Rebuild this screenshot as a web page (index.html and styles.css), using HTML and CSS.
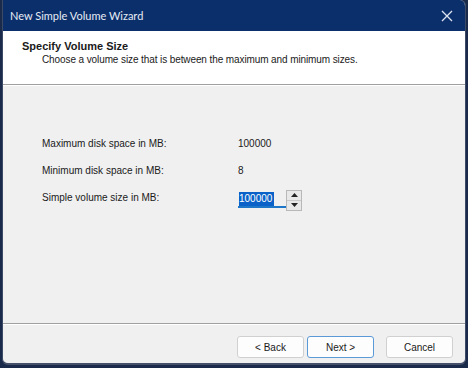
FILE: index.html
```html
<!DOCTYPE html>
<html>
<head>
<meta charset="utf-8">
<link rel="stylesheet" href="styles.css">
</head>
<body>
<div class="window">
  <div class="titlebar">
    <span class="title">New Simple Volume Wizard</span>
    <svg class="close" width="12" height="12" viewBox="0 0 12 12"><path d="M1 1 L11 11 M11 1 L1 11" stroke="#dfe6f2" stroke-width="1.3" fill="none"/></svg>
  </div>
  <div class="header">
    <div class="h-title">Specify Volume Size</div>
    <div class="h-sub">Choose a volume size that is between the maximum and minimum sizes.</div>
  </div>
  <div class="body">
    <div class="grid">
      <div class="lbl">Maximum disk space in MB:</div>
      <div class="val">100000</div>
      <div class="lbl">Minimum disk space in MB:</div>
      <div class="val">8</div>
      <div class="lbl">Simple volume size in MB:</div>
      <div class="val spin-row">
        <div class="input"><span class="sel">100000</span></div>
        <div class="spin">
          <div class="sb"><svg width="7" height="4" viewBox="0 0 7 4"><path d="M3.5 0 L7 4 L0 4Z" fill="#222"/></svg></div>
          <div class="sb"><svg width="7" height="4" viewBox="0 0 7 4"><path d="M0 0 L7 0 L3.5 4Z" fill="#222"/></svg></div>
        </div>
      </div>
    </div>
  </div>
  <div class="footer">
    <button class="btn">&lt; Back</button>
    <button class="btn primary">Next &gt;</button>
    <button class="btn cancel">Cancel</button>
  </div>
</div>
</body>
</html>
```
FILE: styles.css
```css
html, body {
  margin: 0;
  padding: 0;
  background: #1a2a4a;
}
.window {
  width: 462px;
  height: 363px;
  margin-left: 2px;
  border-left: 1px solid #3c4a66;
  border-right: 1px solid #3c4a66;
  border-bottom: 2px solid #44506a;
  border-radius: 0 6px 6px 6px;
  overflow: hidden;
  background: #f0f0f0;
  display: flex;
  flex-direction: column;
  font-family: "Liberation Sans", Arial, sans-serif;
  font-size: 10px;
  color: #1a1a1a;
}
.titlebar {
  height: 31px;
  flex: none;
  background: #0b2f6b;
  display: flex;
  align-items: center;
  justify-content: space-between;
  padding: 0 12px 0 7px;
}
.title {
  font-family: Lato, "Noto Sans", sans-serif;
  font-size: 11px;
  color: #e6ecf5;
}
.close { display: block; }
.header {
  height: 54px;
  flex: none;
  background: #fff;
  border-bottom: 1px solid #a0a0a0;
  box-shadow: 0 1px 0 #ffffff;
  padding: 9px 0 0 19px;
  box-sizing: border-box;
}
.h-title {
  font-weight: bold;
  font-size: 11px;
  line-height: 13px;
}
.h-sub {
  padding-left: 20px;
  line-height: 13px;
  letter-spacing: -0.1px;
}
.body {
  flex: 1;
  border-bottom: 1px solid #a0a0a0;
  box-shadow: 0 1px 0 #ffffff;
  padding: 45px 0 0 39px;
}
.grid {
  display: grid;
  grid-template-columns: 196px auto;
  grid-auto-rows: 27px;
  align-items: center;
}
.lbl, .val { line-height: 12px; }
.spin-row {
  display: flex;
  align-items: center;
}
.input {
  width: 48px;
  height: 17px;
  border-bottom: 2px solid #1e76c8;
  display: flex;
  align-items: center;
  padding-left: 1px;
  margin-top: 4px;
  box-sizing: border-box;
}
.sel {
  background: #0a62c8;
  color: #fff;
  line-height: 14px;
  padding-right: 2px;
}
.spin {
  display: flex;
  flex-direction: column;
  border: 1px solid #b8b8b8;
  width: 14px;
  height: 19px;
  margin-top: 5px;
  background: #e8e8e8;
}
.sb {
  flex: 1;
  display: flex;
  align-items: center;
  justify-content: center;
}
.sb + .sb { border-top: 1px solid #c8c8c8; }
.footer {
  height: 39px;
  flex: none;
  display: flex;
  align-items: flex-start;
  padding: 12px 0 0 234px;
  box-sizing: border-box;
}
.btn {
  width: 67px;
  height: 22px;
  border: 1px solid #d0d0d0;
  border-radius: 3px;
  background: #fdfdfd;
  font-family: "Liberation Sans", Arial, sans-serif;
  font-size: 10px;
  color: #1a1a1a;
  padding: 0;
  margin-right: 3px;
}
.btn.primary { border: 1px solid #5b9ad6; }
.btn.cancel { margin-left: 9px; }
```
